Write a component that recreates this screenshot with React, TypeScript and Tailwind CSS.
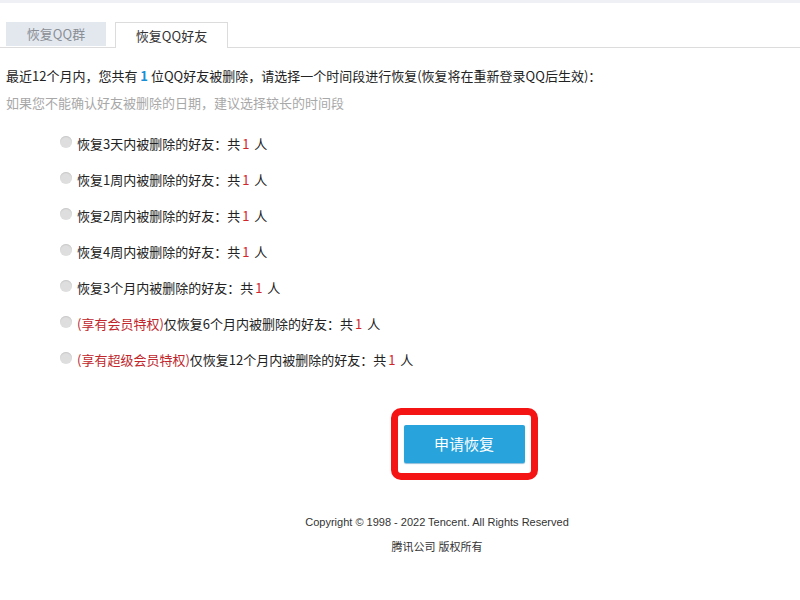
const font = { fontFamily: '"Noto Sans CJK SC", "Liberation Sans", sans-serif' }

const options = [
  { vip: '', text: '恢复3天内被删除的好友：共 ' },
  { vip: '', text: '恢复1周内被删除的好友：共 ' },
  { vip: '', text: '恢复2周内被删除的好友：共 ' },
  { vip: '', text: '恢复4周内被删除的好友：共 ' },
  { vip: '', text: '恢复3个月内被删除的好友：共 ' },
  { vip: '(享有会员特权)', text: '仅恢复6个月内被删除的好友：共 ' },
  { vip: '(享有超级会员特权)', text: '仅恢复12个月内被删除的好友：共 ' },
]

export default function App() {
  return (
    <div
      className="w-[800px] h-[600px] bg-white text-[#222] overflow-hidden border-t-[3px] border-[#eef0f6]"
      style={font}
    >
      <div className="flex items-end gap-[9px] pl-[6px] pt-[19px] border-b border-[#dcdcdc]">
        <div className="w-[100px] h-[24px] bg-[#e3e8ef] text-[#8a8f96] text-[13px] flex items-center justify-center mb-[1px]">
          恢复QQ群
        </div>
        <div className="w-[113px] h-[26px] bg-white border border-b-0 border-[#dcdcdc] text-[#333] text-[13px] flex items-center justify-center -mb-px">
          恢复QQ好友
        </div>
      </div>

      <div className="pl-[6px] pt-[21px] text-[13px] leading-[14px]">
        最近12个月内，您共有 <span className="text-[#1a8fd6] font-bold">1</span>{' '}
        位QQ好友被删除，请选择一个时间段进行恢复(恢复将在重新登录QQ后生效)：
      </div>
      <div className="pl-[6px] pt-[13px] text-[13px] leading-[14px] text-[#a8a8a8]">
        如果您不能确认好友被删除的日期，建议选择较长的时间段
      </div>

      <div className="pl-[60px] pt-[27px] flex flex-col gap-[22px]">
        {options.map((o, i) => (
          <label key={i} className="flex items-center h-[14px] text-[13px]">
            <span className="w-[12px] h-[12px] rounded-full bg-[#dedede] shadow-[inset_0_1px_1px_#c8c8c8] mr-[5px] -mt-[4px]" />
            {o.vip && <span className="text-[#c0262b]">{o.vip}</span>}
            <span>{o.text}</span>
            <span className="text-[#d0262b] mx-[2px]">1</span>
            <span>&nbsp;人</span>
          </label>
        ))}
      </div>

      <div className="flex justify-center pt-[41px] pl-[128px]">
        <div className="border-[7px] border-[#f41414] rounded-[10px] px-[6px] py-[10px] bg-white">
          <button className="w-[121px] h-[38px] bg-[#28a3dc] text-white text-[15px] rounded-[2px] shadow-[0_1px_1px_#8fbdd8]">
            申请恢复
          </button>
        </div>
      </div>

      <div
        className="pl-[74px] pt-[34px] text-center text-[11px] text-[#333]"
        style={{ fontFamily: '"Liberation Sans", "Noto Sans CJK SC", sans-serif' }}
      >
        <div>Copyright © 1998 - 2022 Tencent. All Rights Reserved</div>
        <div className="pt-[8px]">腾讯公司 版权所有</div>
      </div>
    </div>
  )
}
